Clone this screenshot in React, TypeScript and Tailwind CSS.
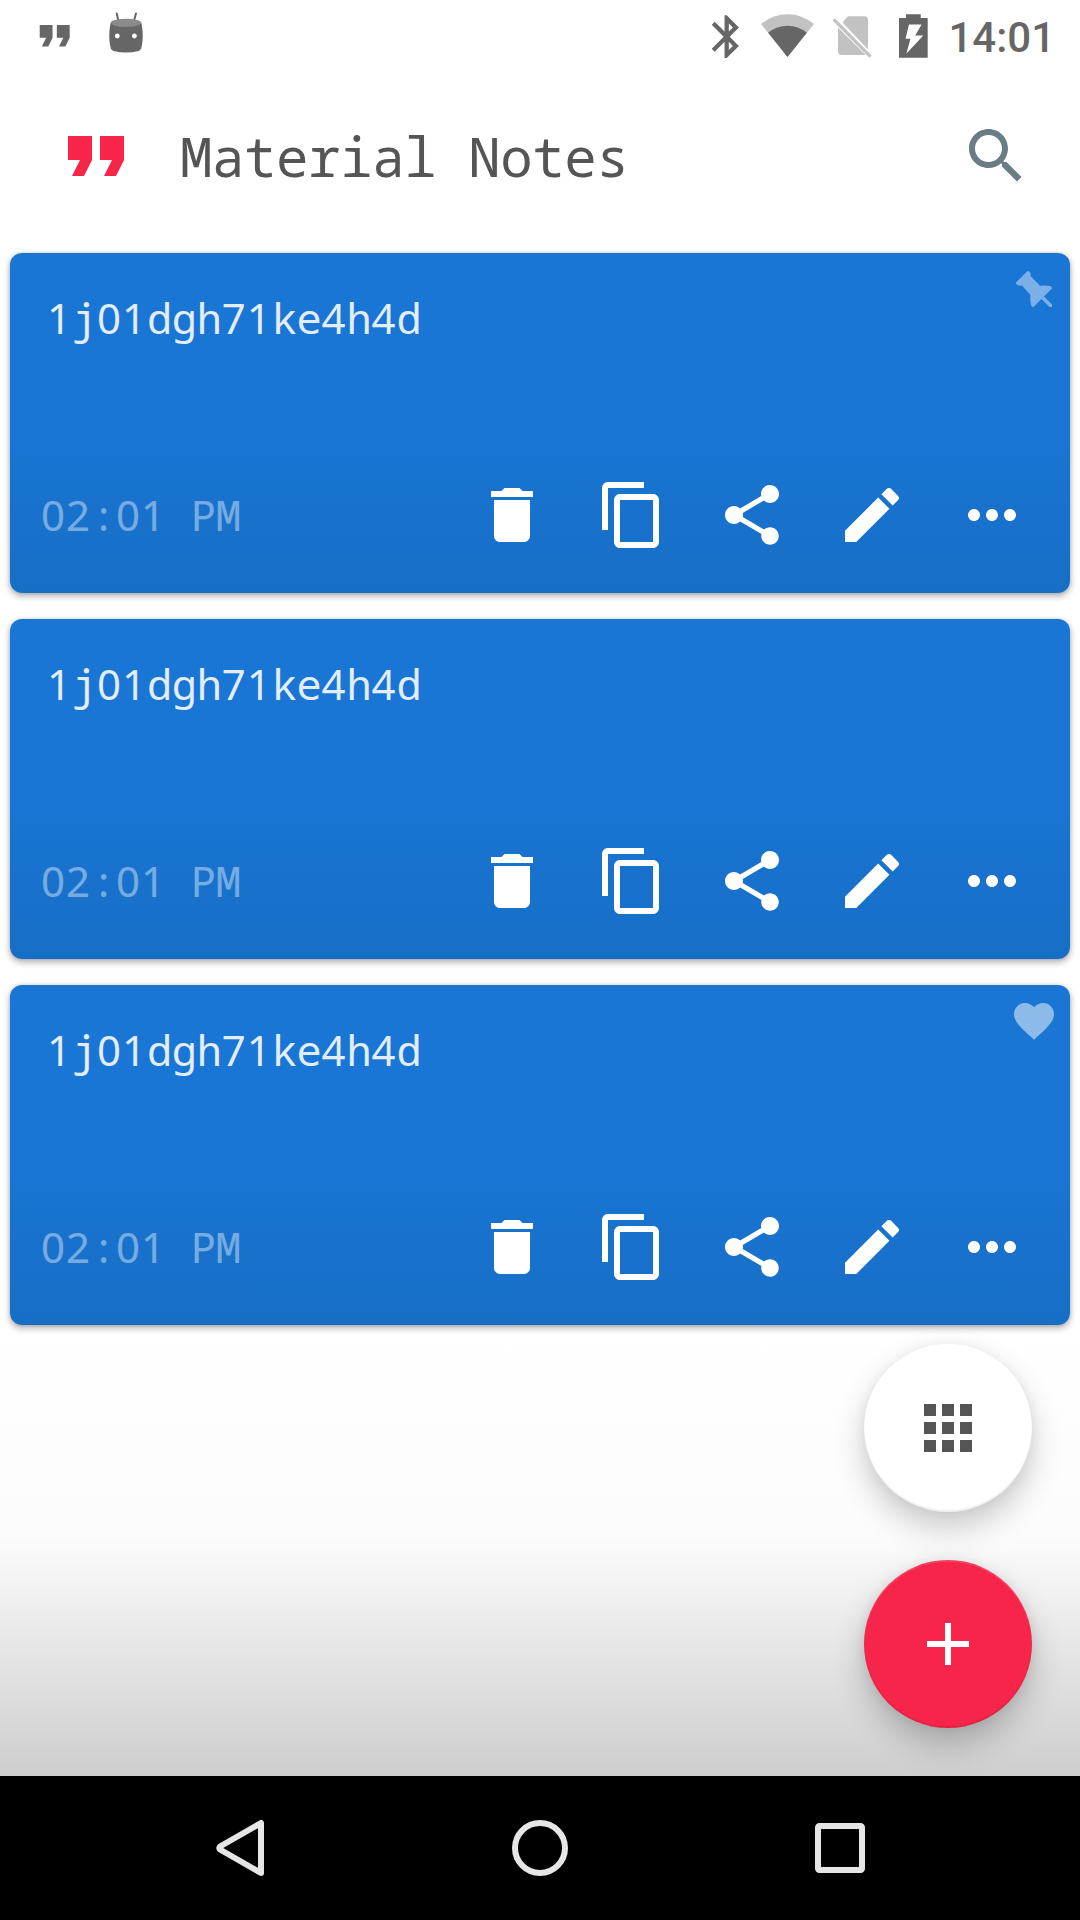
import { Fragment } from "react";
import type { ReactNode } from "react";

const QUOTE = "M6 17h3l2-4V7H5v6h3zm8 0h3l2-4V7h-6v6h3z";

function Icon({ d, className }: { d: string; className: string }) {
  return (
    <svg viewBox="0 0 24 24" fill="currentColor" className={className}>
      <path d={d} />
    </svg>
  );
}

function StatusBar() {
  return (
    <div className="flex h-[72px] shrink-0 items-start justify-between pr-[25px] pl-[28.500px] text-[#666666]">
      <div className="flex items-start">
        <Icon d={QUOTE} className="mt-[10px] size-[51.4px]" />
        <svg viewBox="0 0 36 42" className="mt-[12px] ml-[28.1px] h-[42px] w-[36px]">
          <path d="M8.700 1.500 10.700 10M28 1.500 25.600 10" stroke="#666" strokeWidth="2" strokeLinecap="round" />
          <path d="M2.600 11C1 19 .6 28 2.800 36.500Q3.600 38.400 5.500 39Q18 42 30.500 39Q32.400 38.400 33.200 36.500C35.400 28 35 19 33.400 11Z" fill="#666" />
          <ellipse cx="18" cy="10.800" rx="15.400" ry="4" fill="#8b8b8b" />
          <circle cx="9.300" cy="24" r="2.400" fill="#fff" />
          <circle cx="26.400" cy="24" r="2.400" fill="#fff" />
        </svg>
      </div>
      <div className="flex items-start">
        <Icon
          d="M17.710 7.710 12 2h-1v7.590L6.410 5 5 6.410 10.590 12 5 17.590 6.410 19 11 14.410V22h1l5.710-5.710-4.300-4.290zM13 5.830l1.880 1.880L13 9.590zm1.880 10.460L13 18.170v-3.760z"
          className="mt-[10.500px] size-[51.400px]"
        />
        <svg viewBox="0 0 54 44" className="mt-[14px] ml-[8.600px] h-[44px] w-[54px]">
          <path d="M26.500 43 0 10Q12 .2 26.500 .2T53 10Z" fill="#c2c2c2" />
          <path d="M26.500 43 7.200 18.700Q16 11.800 26.500 11.800T45.800 18.700Z" fill="#666" />
        </svg>
        <svg viewBox="0 0 40 44" className="mt-[15px] ml-[17px] h-[44px] w-[40px]">
          <path
            d="M16 1.200H32Q36 1.200 36 5.200V34.600L11.300 8.300 11.300 6.300ZM6 12.400V36Q6 40 10 40H32Q32.900 40 33.500 39.700L6 12.400Z"
            fill="#c2c2c2"
          />
          <path d="M1.700 4.300 38.500 41.700" stroke="#c2c2c2" strokeWidth="3.200" />
        </svg>
        <svg viewBox="0 0 30 44" className="mt-[14px] ml-[27px] h-[44px] w-[30px]">
          <path
            fillRule="evenodd"
            d="M7 .3H21.700V4H28.700V43.700H0V4H7ZM10 10.500 6.500 24.800H11.500L7.300 39.700 24.300 21.500H16.200L22.600 10.500Z"
            fill="#666"
          />
        </svg>
        <span className="mt-[13px] ml-[19px] font-['Roboto',sans-serif] text-[42px] leading-[50px] font-medium">14:01</span>
      </div>
    </div>
  );
}

function Header() {
  return (
    <header className="flex h-[168px] shrink-0 items-center pr-[48px] pl-[48px]">
      <Icon d={QUOTE} className="size-[96px] text-[#f62549]" />
      <h1 className="ml-[36px] flex-1 font-['Noto_Sans_Mono','Droid_Sans_Mono','DejaVu_Sans_Mono',monospace] text-[54px] leading-[64px] tracking-[-0.370px] text-[#555555]">
        Material Notes
      </h1>
      <Icon
        d="M15.500 14h-.79l-.28-.27C15.410 12.590 16 11.110 16 9.500 16 5.910 13.090 3 9.500 3S3 5.910 3 9.500 5.910 16 9.500 16c1.610 0 3.090-.59 4.230-1.570l.27.28v.79l5 4.990L20.490 19zm-6 0C7.010 14 5 11.990 5 9.500S7.010 5 9.500 5 14 7.010 14 9.500 11.990 14 9.500 14z"
        className="size-[72px] text-[#6a7c84]"
      />
    </header>
  );
}

/* Letters come from a monospaced face; digits use a plain-zero face tracked to the same pitch. */
function MonoText({ text }: { text: string }) {
  return (
    <>
      {text.split(/(\d+)/).map((run, i) =>
        /^\d/.test(run) ? (
          <span key={i} className="font-['Noto_Sans',sans-serif] text-[42px] tracking-[0.950px]">
            {run}
          </span>
        ) : (
          <Fragment key={i}>{run}</Fragment>
        ),
      )}
    </>
  );
}

const ACTIONS = [
  "M6 19c0 1.100.9 2 2 2h8c1.100 0 2-.9 2-2V7H6zM19 4h-3.500l-1-1h-5l-1 1H5v2h14z",
  "M16 1H4c-1.100 0-2 .9-2 2v14h2V3h12zm3 4H8c-1.100 0-2 .9-2 2v14c0 1.100.9 2 2 2h11c1.100 0 2-.9 2-2V7c0-1.100-.9-2-2-2zm0 16H8V7h11z",
  "M18 16.080c-.76 0-1.440.3-1.960.77L8.910 12.700c.05-.23.09-.46.09-.7s-.04-.47-.09-.7l7.050-4.110c.54.5 1.250.81 2.040.81 1.660 0 3-1.340 3-3s-1.340-3-3-3-3 1.340-3 3c0 .24.04.47.09.7L8.040 9.810C7.500 9.310 6.790 9 6 9c-1.660 0-3 1.340-3 3s1.340 3 3 3c.79 0 1.500-.31 2.040-.81l7.120 4.160c-.05.21-.08.43-.08.65 0 1.610 1.310 2.920 2.920 2.920s2.920-1.310 2.920-2.920-1.310-2.920-2.920-2.920z",
  "M3 17.250V21h3.750L17.810 9.940l-3.750-3.750zM20.710 7.040c.39-.39.39-1.020 0-1.410l-2.340-2.340c-.39-.39-1.020-.39-1.410 0l-1.830 1.830 3.750 3.750z",
  "M6 10c-1.100 0-2 .9-2 2s.9 2 2 2 2-.9 2-2-.9-2-2-2zm12 0c-1.100 0-2 .9-2 2s.9 2 2 2 2-.9 2-2-.9-2-2-2zm-6 0c-1.100 0-2 .9-2 2s.9 2 2 2 2-.9 2-2-.9-2-2-2z",
];

function NoteCard({ badge }: { badge?: ReactNode }) {
  return (
    <article className="relative flex h-[340px] flex-col justify-between rounded-[12px] bg-linear-to-b from-[#1976d5] from-50% to-[#176ec5] pt-[35px] pr-[18px] pb-[18px] pl-[31px] font-['Noto_Sans_Mono','Droid_Sans_Mono','DejaVu_Sans_Mono',monospace] text-[42px] leading-[60px] tracking-[-0.260px] shadow-[0_3px_7px_rgba(0,0,0,0.32),0_0_3px_rgba(0,0,0,0.15)]">
      <p className="pl-[6px] text-white/88">
        <MonoText text="1j01dgh71ke4h4d" />
      </p>
      <div className="flex h-[120px] items-center justify-between">
        <time className="text-white/41">
          <MonoText text="02:01 PM" />
        </time>
        <div className="flex">
          {ACTIONS.map((d) => (
            <button key={d} className="flex size-[120px] items-center justify-center text-white">
              <Icon d={d} className="size-[72px]" />
            </button>
          ))}
        </div>
      </div>
      {badge && <div className="absolute top-[12px] right-[12px]">{badge}</div>}
    </article>
  );
}

const pin = (
  <svg viewBox="0 0 48 48" className="size-[48px] fill-white/42">
    <path d="M16.800 6.700Q18.300 5.400 19.600 6.700 21 8.200 20.500 11L30 20.700Q36 20 40.700 21.300 42.600 22.300 41.700 23.700L34 31.500 42 39.500V42H39.500L31.500 34 23.700 41.700Q22.300 42.600 21.300 40.700 19.800 36 20.500 30L12 20.500Q9 21 6.700 19.600 5.400 18.300 6.700 16.800Z" />
  </svg>
);

const heart = (
  <Icon
    d="M12 21.350l-1.450-1.320C5.400 15.360 2 12.280 2 8.500 2 5.420 4.420 3 7.500 3c1.740 0 3.410.81 4.500 2.090C13.090 3.810 14.760 3 16.500 3 19.580 3 22 5.420 22 8.500c0 3.780-3.400 6.860-8.550 11.540z"
    className="size-[48px] text-white/50"
  />
);

export default function App() {
  return (
    <div className="flex h-[1920px] w-[1080px] flex-col overflow-hidden bg-white">
      <div className="relative flex flex-1 flex-col bg-[linear-gradient(to_bottom,#fff_0,#fff_1310px,#fcfcfc_1536px,#cecece_1776px)]">
        <StatusBar />
        <Header />
        <main className="flex flex-col gap-[26px] px-[10px] pt-[13px]">
          <NoteCard badge={pin} />
          <NoteCard />
          <NoteCard badge={heart} />
        </main>
        <div className="absolute right-[48px] bottom-[48px] flex flex-col gap-[48px]">
          <button className="flex size-[168px] items-center justify-center rounded-full bg-white text-[#555555] shadow-[0_16px_32px_rgba(0,0,0,0.2),0_0_12px_rgba(0,0,0,0.06),inset_0_-2px_1px_rgba(0,0,0,0.06)]">
            <Icon
              d="M4 8h4V4H4zm6 12h4v-4h-4zm-6 0h4v-4H4zm0-6h4v-4H4zm6 0h4v-4h-4zm6-10v4h4V4zm-6 4h4V4h-4zm6 6h4v-4h-4zm0 6h4v-4h-4z"
              className="size-[72px]"
            />
          </button>
          <button className="flex size-[168px] items-center justify-center rounded-full bg-[#f62549] text-white shadow-[0_16px_32px_rgba(0,0,0,0.22),0_0_12px_rgba(0,0,0,0.07),inset_0_-2px_1px_rgba(0,0,0,0.08),inset_0_2px_1px_rgba(255,255,255,0.12)]">
            <Icon d="M19 13h-6v6h-2v-6H5v-2h6V5h2v6h6z" className="size-[72px]" />
          </button>
        </div>
      </div>
      <nav className="flex h-[144px] shrink-0 items-center justify-center gap-[240px] bg-black">
        <svg viewBox="0 0 60 60" className="size-[60px] fill-none stroke-[#e6e6e6]" strokeWidth="6" strokeLinejoin="round">
          <path d="M51 5V55L10 31.500Q8.500 30 10 28.500Z" />
        </svg>
        <svg viewBox="0 0 60 60" className="size-[60px] fill-none stroke-[#e6e6e6]" strokeWidth="6">
          <circle cx="30" cy="30" r="25" />
        </svg>
        <svg viewBox="0 0 60 60" className="size-[60px] fill-none stroke-[#e6e6e6]" strokeWidth="6">
          <rect x="8" y="8" width="44" height="44" rx="1.500" />
        </svg>
      </nav>
    </div>
  );
}
